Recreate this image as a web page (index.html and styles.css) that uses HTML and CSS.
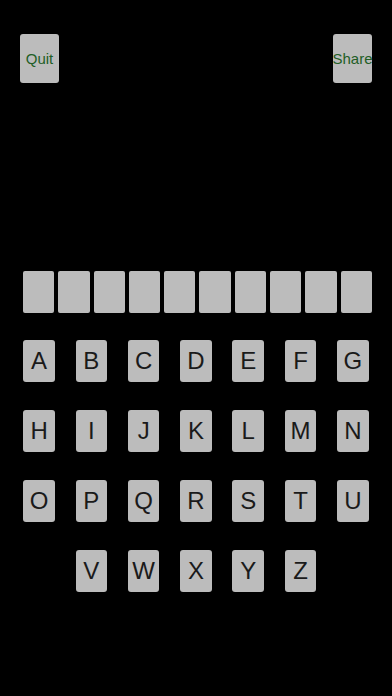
FILE: index.html
```html
<!DOCTYPE html>
<html>
<head>
<meta charset="utf-8">
<link rel="stylesheet" href="styles.css">
</head>
<body>
<div class="app">
  <div class="topbar">
    <div class="btn">Quit</div>
    <div class="btn">Share</div>
  </div>
  <div class="slots">
    <div class="slot"></div><div class="slot"></div><div class="slot"></div><div class="slot"></div><div class="slot"></div>
    <div class="slot"></div><div class="slot"></div><div class="slot"></div><div class="slot"></div><div class="slot"></div>
  </div>
  <div class="keys">
    <div class="key">A</div><div class="key">B</div><div class="key">C</div><div class="key">D</div><div class="key">E</div><div class="key">F</div><div class="key">G</div>
    <div class="key">H</div><div class="key">I</div><div class="key">J</div><div class="key">K</div><div class="key">L</div><div class="key">M</div><div class="key">N</div>
    <div class="key">O</div><div class="key">P</div><div class="key">Q</div><div class="key">R</div><div class="key">S</div><div class="key">T</div><div class="key">U</div>
    <div class="key first-v">V</div><div class="key">W</div><div class="key">X</div><div class="key">Y</div><div class="key">Z</div>
  </div>
</div>
</body>
</html>
```

FILE: styles.css
```css
html, body {
  margin: 0;
  padding: 0;
  background: #000;
  width: 392px;
  height: 696px;
  overflow: hidden;
}
.app {
  font-family: "Liberation Sans", Arial, sans-serif;
  padding-top: 34px;
}
.topbar {
  display: flex;
  justify-content: space-between;
  padding: 0 20px;
}
.btn {
  width: 39px;
  height: 49px;
  background: #bcbcbc;
  border-radius: 3px;
  color: #225e26;
  font-size: 15px;
  display: flex;
  align-items: center;
  justify-content: center;
  white-space: nowrap;
  overflow: visible;
}
.slots {
  display: flex;
  gap: 4px;
  margin: 188px 20px 0 23px;
}
.slot {
  width: 31.3px;
  height: 42px;
  background: #bcbcbc;
  border-radius: 2px;
}
.keys {
  display: grid;
  grid-template-columns: repeat(7, 31.5px);
  column-gap: 20.8px;
  row-gap: 28px;
  margin: 27px 0 0 23.3px;
}
.key {
  height: 42px;
  background: #bcbcbc;
  border-radius: 3px;
  color: #1a1a1a;
  font-size: 24px;
  display: flex;
  align-items: center;
  justify-content: center;
}
.first-v {
  grid-column-start: 2;
}
```
